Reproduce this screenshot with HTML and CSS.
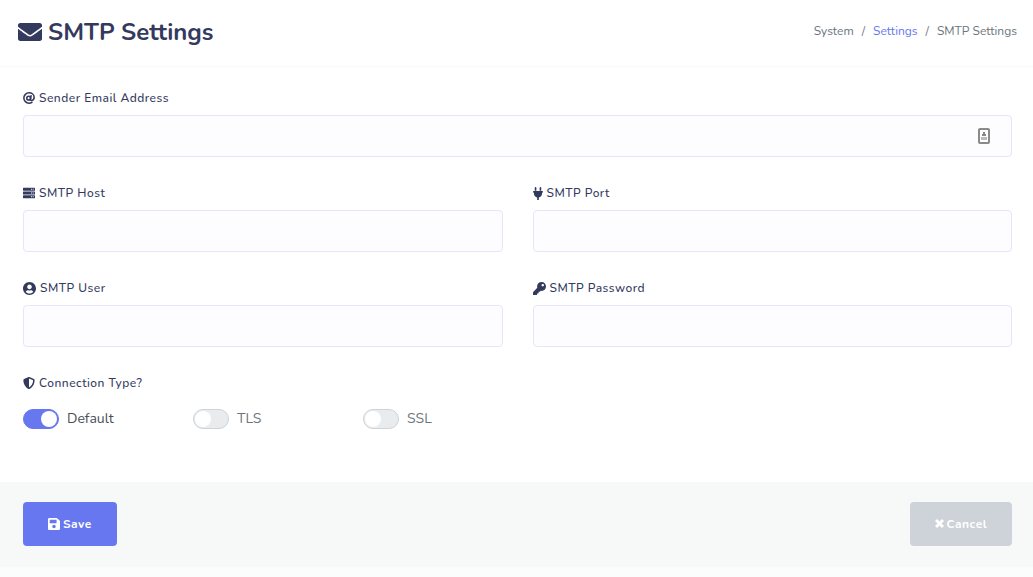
FILE: index.html
```html
<!DOCTYPE html>
<html lang="en">
<head>
<meta charset="utf-8">
<title>SMTP Settings</title>
<link rel="stylesheet" href="styles.css">
</head>
<body>
<main class="card">
  <header class="card-header">
    <h1 class="title">
      <svg class="title-icon" viewBox="0 64 512 384" aria-hidden="true"><path d="M502.3 190.8c3.9-3.1 9.7-.2 9.7 4.7V400c0 26.5-21.5 48-48 48H48c-26.5 0-48-21.5-48-48V195.6c0-5 5.7-7.8 9.7-4.7 22.4 17.4 52.1 39.5 154.1 113.6 21.1 15.4 56.7 47.8 92.2 47.6 35.7.3 72-32.8 92.3-47.6 102-74.1 131.6-96.3 154-113.7zM256 320c23.2.4 56.6-29.2 73.4-41.4 132.7-96.3 142.8-104.7 173.4-128.7 5.8-4.5 9.2-11.5 9.2-18.9v-19c0-26.5-21.5-48-48-48H48c-26.5 0-48 21.5-48 48v19c0 7.4 3.4 14.3 9.2 18.9 30.6 23.9 40.7 32.4 173.4 128.7 16.8 12.2 50.2 41.8 73.4 41.4z"/></svg>
      SMTP Settings
    </h1>
    <nav class="breadcrumb" aria-label="Breadcrumb">
      <span>System</span><span>/</span><a href="#">Settings</a><span>/</span><span>SMTP Settings</span>
    </nav>
  </header>
  <form>
    <div class="fields">
      <div class="field field-wide">
        <label for="sender"><svg class="icon" viewBox="0 0 512 512" aria-hidden="true"><g fill="none" stroke="currentColor" stroke-width="66" stroke-linecap="round"><circle cx="242" cy="264" r="80"/><path d="M344 160l-26 140c-8 48 20 66 54 58 54-12 104-62 104-138C476 110 380 36 256 36 134 36 36 134 36 256s98 220 220 220c48 0 92-14 126-38"/></g></svg>Sender Email Address</label>
        <div class="input-wrap">
          <input id="sender" type="email">
          <svg class="autofill" viewBox="0 0 12 16" aria-hidden="true"><rect x="1" y="1" width="10" height="14" rx="1" fill="#fff" stroke="#8a8a8a" stroke-width="2"/><path d="M5 4h2v2h1v2H4V6h1z" fill="#888"/><path d="M3 9h6v3H3z" fill="#bbb"/></svg>
        </div>
      </div>
      <div class="field">
        <label for="host"><svg class="icon" viewBox="0 0 512 512" aria-hidden="true"><path fill-rule="evenodd" d="M24 32h464a24 24 0 0 1 24 24v80a24 24 0 0 1-24 24H24a24 24 0 0 1-24-24V56a24 24 0 0 1 24-24zM344 76v40h40V76zM416 76v40h40V76zM24 192h464a24 24 0 0 1 24 24v80a24 24 0 0 1-24 24H24a24 24 0 0 1-24-24v-80a24 24 0 0 1 24-24zM344 236v40h40v-40zM416 236v40h40v-40zM24 352h464a24 24 0 0 1 24 24v80a24 24 0 0 1-24 24H24a24 24 0 0 1-24-24v-80a24 24 0 0 1 24-24zM344 396v40h40v-40zM416 396v40h40v-40z"/></svg>SMTP Host</label>
        <input id="host" type="text">
      </div>
      <div class="field">
        <label for="port"><svg class="icon icon-plug" viewBox="0 0 384 512" aria-hidden="true"><path d="M256 144V32c0-17.673 14.327-32 32-32s32 14.327 32 32v112h-64zm112 16H16c-8.837 0-16 7.163-16 16v32c0 8.837 7.163 16 16 16h16v32c0 77.406 54.969 141.971 128 156.796V512h64v-99.204c73.031-14.825 128-79.39 128-156.796v-32h16c8.837 0 16-7.163 16-16v-32c0-8.837-7.163-16-16-16zm-240-16V32c0-17.673-14.327-32-32-32S64 14.327 64 32v112h64z"/></svg>SMTP Port</label>
        <input id="port" type="text">
      </div>
      <div class="field">
        <label for="user"><svg class="icon icon-large" viewBox="0 8 496 496" aria-hidden="true"><path d="M248 8C111 8 0 119 0 256s111 248 248 248 248-111 248-248S385 8 248 8zm0 96c48.600 0 88 39.400 88 88s-39.400 88-88 88-88-39.400-88-88 39.400-88 88-88zm0 344c-58.700 0-111.300-26.600-146.500-68.200 18.800-35.400 55.600-59.800 98.500-59.800 2.400 0 4.800.4 7.100 1.100 13 4.200 26.600 6.900 40.900 6.900 14.300 0 28-2.700 40.900-6.900 2.300-.7 4.700-1.100 7.100-1.100 42.900 0 79.700 24.400 98.500 59.800C359.300 421.400 306.700 448 248 448z"/></svg>SMTP User</label>
        <input id="user" type="text">
      </div>
      <div class="field">
        <label for="password"><svg class="icon icon-large" viewBox="0 0 512 512" aria-hidden="true"><path d="M512 176.001C512 273.203 433.202 352 336 352c-11.22 0-22.19-1.062-32.827-3.069l-24.012 27.014A23.999 23.999 0 0 1 261.223 384H224v40c0 13.255-10.745 24-24 24h-40v40c0 13.255-10.745 24-24 24H24c-13.255 0-24-10.745-24-24v-78.059c0-6.365 2.529-12.47 7.029-16.971l161.802-161.802C163.108 213.814 160 195.271 160 176 160 78.798 238.797.001 335.999 0 433.488-.001 512 78.511 512 176.001zM336 128c0 26.51 21.49 48 48 48s48-21.49 48-48-21.49-48-48-48-48 21.49-48 48z"/></svg>SMTP Password</label>
        <input id="password" type="password">
      </div>
      <fieldset class="field-wide">
        <legend><svg class="icon" viewBox="0 0 512 512" aria-hidden="true"><path d="M466.500 83.700l-192-80a48.150 48.150 0 0 0-36.900 0l-192 80C27.700 91.100 16 108.600 16 128c0 198.500 114.500 335.700 221.500 380.300 11.800 4.900 25.100 4.900 36.900 0C360.100 472.600 496 349.300 496 128c0-19.400-11.700-36.900-29.500-44.300zM256.100 446.300l-.1-381 175.900 73.300c-3.300 151.400-82.100 261.100-175.800 307.700z"/></svg>Connection Type?</legend>
        <div class="switches">
          <label class="switch"><input type="radio" name="connection" checked><span>Default</span></label>
          <label class="switch"><input type="radio" name="connection"><span>TLS</span></label>
          <label class="switch"><input type="radio" name="connection"><span>SSL</span></label>
        </div>
      </fieldset>
    </div>
    <footer class="card-footer">
      <button class="btn btn-primary" type="submit"><svg class="icon" viewBox="0 32 448 448" aria-hidden="true"><path d="M433.941 129.941l-83.882-83.882A48 48 0 0 0 316.118 32H48C21.490 32 0 53.490 0 80v352c0 26.510 21.490 48 48 48h352c26.510 0 48-21.490 48-48V163.882a48 48 0 0 0-14.059-33.941zM224 416c-35.346 0-64-28.654-64-64 0-35.346 28.654-64 64-64s64 28.654 64 64c0 35.346-28.654 64-64 64zm96-304.520V212c0 6.627-5.373 12-12 12H76c-6.627 0-12-5.373-12-12V108c0-6.627 5.373-12 12-12h228.520c3.183 0 6.235 1.264 8.485 3.515l3.480 3.480A11.996 11.996 0 0 1 320 111.480z"/></svg>Save</button>
      <button class="btn btn-secondary" type="button"><svg class="icon icon-narrow" viewBox="0 0 9 12" aria-hidden="true"><path d="M1 2l7 7M8 2l-7 7" fill="none" stroke="currentColor" stroke-width="3"/></svg>Cancel</button>
    </footer>
  </form>
</main>
</body>
</html>
```
FILE: styles.css
```css
* { box-sizing: border-box; }

body {
  margin: 0;
  background: #fafdfb;
  color: #6c757d;
  font-family: Nunito, Lato, "Open Sans", sans-serif;
  font-size: 14px;
}

.card {
  background: #fff;
  box-shadow: 0 4px 8px rgba(0, 0, 0, .03);
}

.card-header {
  display: flex;
  align-items: center;
  justify-content: space-between;
  padding: 16px 16px 18px 18px;
  border-bottom: 1px solid #f9f9f9;
}

.title {
  display: flex;
  align-items: center;
  gap: 6px;
  margin: 0;
  color: #34395e;
  font-size: 24px;
  font-weight: 700;
  line-height: 32px;
}

.title-icon {
  width: 24px;
  height: 18px;
  fill: currentColor;
}

.breadcrumb {
  display: flex;
  gap: 8px;
  padding-bottom: 2px;
  font-size: 12px;
  line-height: 20px;
}

.breadcrumb a {
  color: #6777ef;
  text-decoration: none;
}

.fields {
  display: grid;
  grid-template-columns: 1fr 1fr;
  gap: 26px 30px;
  padding: 21px 21px 53px 23px;
}

.field-wide { grid-column: 1 / -1; }

.field label,
legend {
  display: flex;
  align-items: center;
  gap: 4px;
  margin-bottom: 7px;
  padding: 0;
  color: #34395e;
  font-size: 12px;
  font-weight: 500;
  letter-spacing: .5px;
  line-height: 20px;
}

.icon {
  width: 12px;
  height: 12px;
  fill: currentColor;
}

.icon-large {
  width: 13px;
  height: 13px;
}

.icon-narrow { width: 9px; }

.icon-plug {
  width: 10px;
  height: 13px;
}

.field input {
  display: block;
  width: 100%;
  height: 42px;
  padding: 10px 15px;
  border: 1px solid #e4e6fc;
  border-radius: 4px;
  background: #fdfdff;
  font: inherit;
}

.input-wrap { position: relative; }

.autofill {
  position: absolute;
  top: 13px;
  right: 22px;
  width: 12px;
  height: 16px;
}

fieldset {
  min-width: 0;
  margin: 0;
  padding: 0;
  border: 0;
}

.switches {
  display: flex;
  padding-top: 9px;
}

.switch {
  display: flex;
  align-items: center;
  gap: 8px;
  width: 170px;
  line-height: 20px;
}

.switch input {
  display: flex;
  align-items: center;
  appearance: none;
  width: 36px;
  height: 20px;
  margin: 0;
  padding: 1px;
  border: 1px solid #cdd3d8;
  border-radius: 10px;
  background: #e9ecef;
}

.switch input::before {
  width: 16px;
  height: 16px;
  border-radius: 50%;
  background: #fff;
  content: "";
}

.switch input:checked {
  justify-content: flex-end;
  border-color: #6777ef;
  background: #6777ef;
}

.switch input:checked + span { color: #495057; }

.card-footer {
  display: flex;
  justify-content: space-between;
  padding: 20px 21px 21px 23px;
  background: #f7f9f9;
}

.btn {
  display: flex;
  align-items: center;
  gap: 3px;
  height: 44px;
  padding: 0 25px;
  border: 0;
  border-radius: 4px;
  color: #fff;
  font: inherit;
  font-size: 12px;
  font-weight: 700;
  letter-spacing: .5px;
}

.btn-primary { background: #6777ef; }

.btn-secondary { background: #cdd3d8; }
```
